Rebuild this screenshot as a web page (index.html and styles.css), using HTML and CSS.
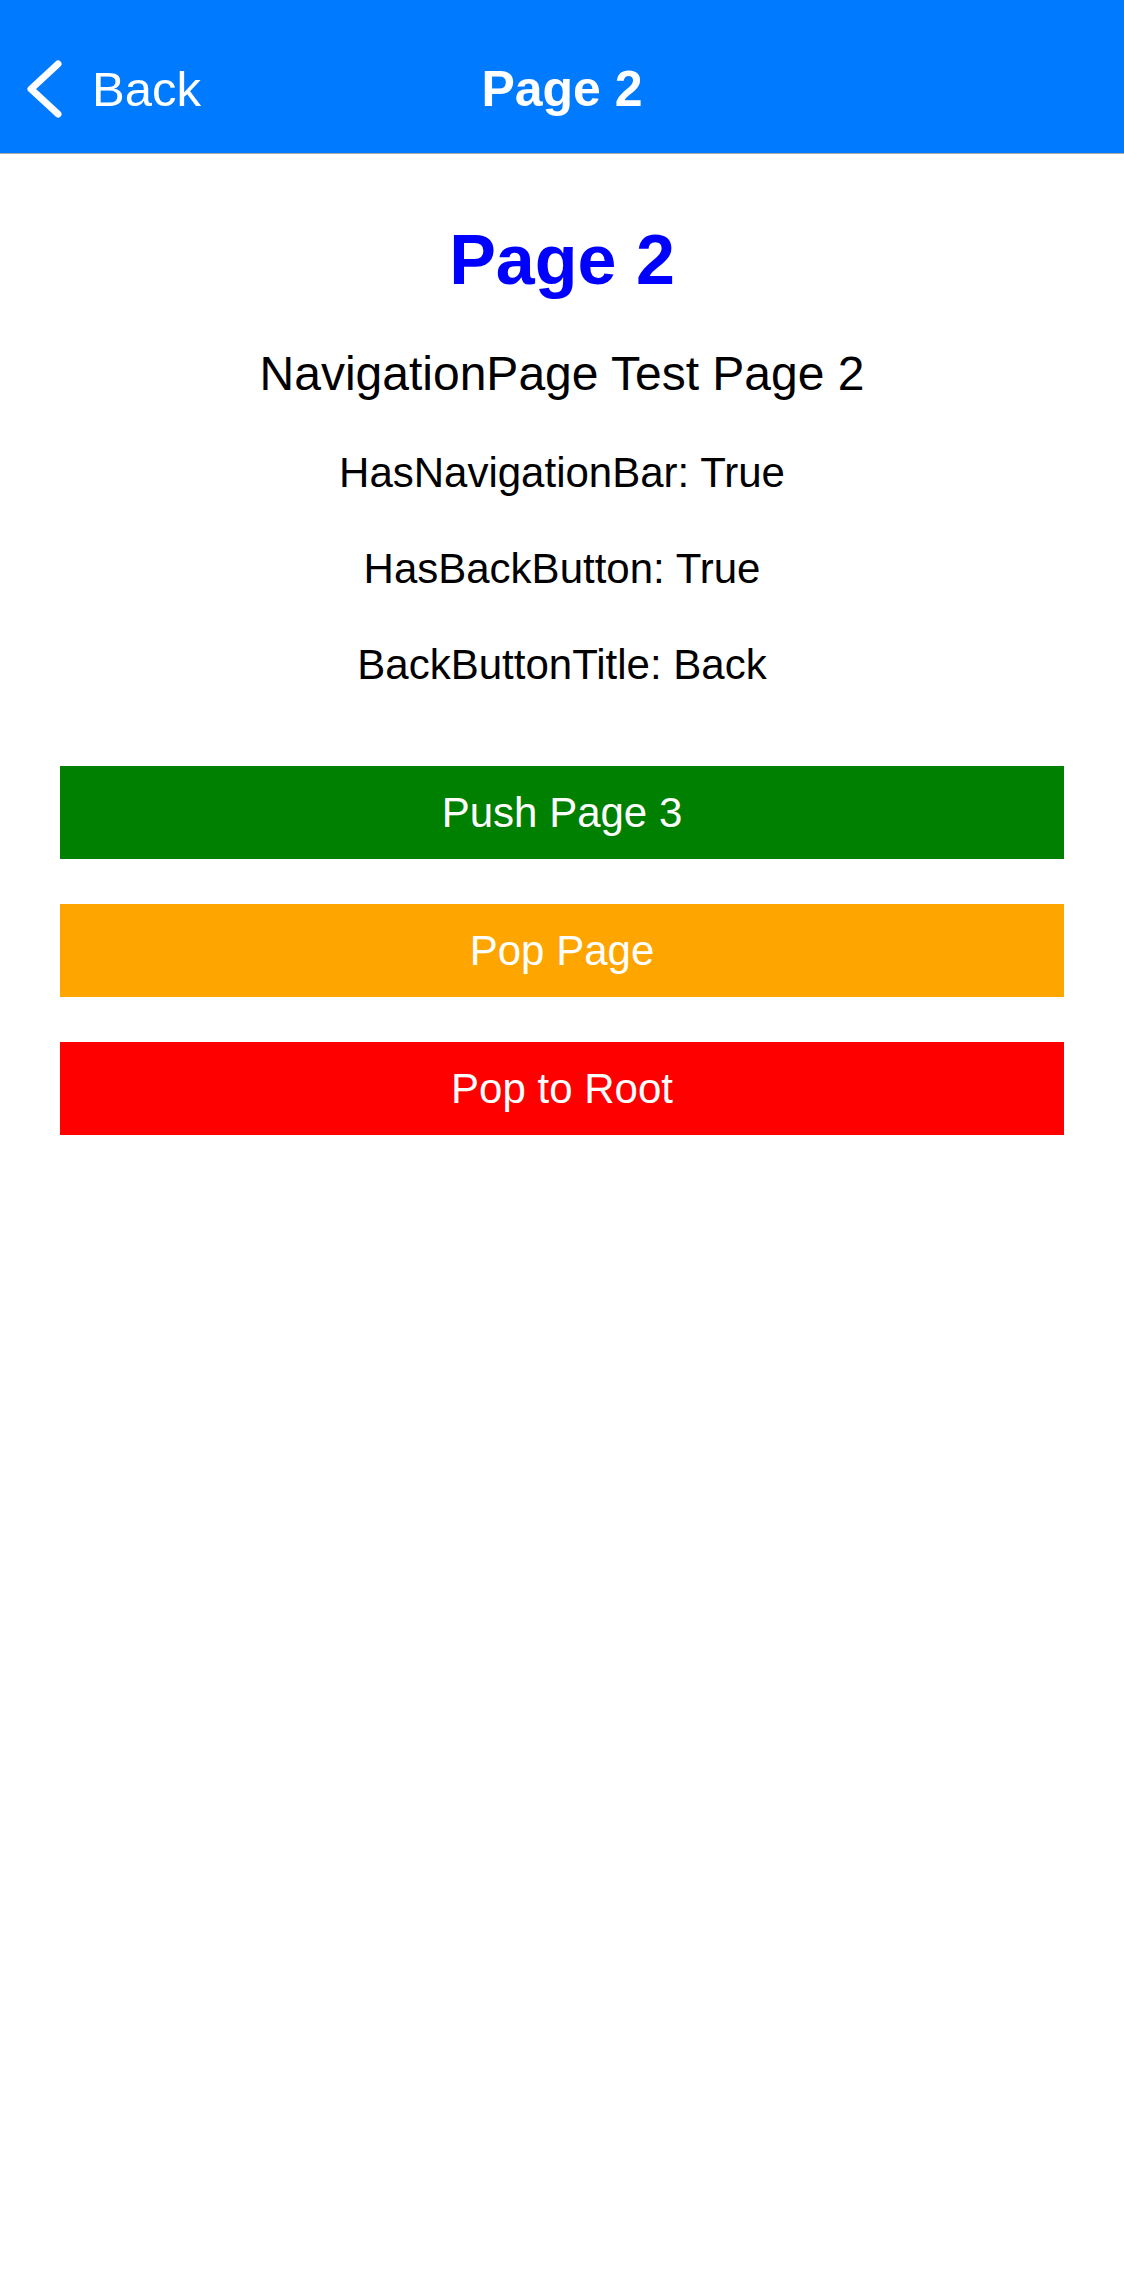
FILE: index.html
```html
<!DOCTYPE html>
<html lang="en">
<head>
<meta charset="utf-8">
<title>Page 2</title>
<link rel="stylesheet" href="styles.css">
</head>
<body>
<header class="navbar">
  <div class="nav-inner">
    <div class="nav-left">
      <a class="back-btn" href="#">
        <svg class="chevron" width="38" height="60" viewBox="0 0 38 60" aria-hidden="true">
          <polyline points="33,5 6,30 33,55" fill="none" stroke="#ffffff" stroke-width="7" stroke-linecap="round" stroke-linejoin="round"/>
        </svg>
        <span class="back-label">Back</span>
      </a>
    </div>
    <div class="nav-title">Page 2</div>
    <div class="nav-right"></div>
  </div>
</header>
<main class="content">
  <h1 class="page-title">Page 2</h1>
  <p class="subtitle">NavigationPage Test Page 2</p>
  <p class="info info-first">HasNavigationBar: True</p>
  <p class="info">HasBackButton: True</p>
  <p class="info">BackButtonTitle: Back</p>
  <div class="actions">
    <button class="action action-green" type="button">Push Page 3</button>
    <button class="action action-orange" type="button">Pop Page</button>
    <button class="action action-red" type="button">Pop to Root</button>
  </div>
</main>
</body>
</html>
```

FILE: styles.css
```css
html, body {
  margin: 0;
  padding: 0;
  background: #ffffff;
}

body {
  font-family: "Liberation Sans", Arial, sans-serif;
  color: #000000;
  width: 1124px;
  min-height: 2286px;
}

.navbar {
  background: #007aff;
  height: 129px;
  padding-top: 24px;
  border-bottom: 1px solid #a9a9a9;
  box-sizing: content-box;
}

.nav-inner {
  height: 129px;
  display: grid;
  grid-template-columns: 1fr auto 1fr;
  align-items: center;
}

.nav-left {
  display: flex;
  align-items: center;
}

.back-btn {
  display: flex;
  align-items: center;
  gap: 29px;
  margin-left: 25px;
  color: #ffffff;
  text-decoration: none;
}

.chevron {
  display: block;
  flex: none;
}

.back-label {
  font-size: 49px;
  line-height: 60px;
}

.nav-title {
  color: #ffffff;
  font-weight: bold;
  font-size: 50px;
  line-height: 60px;
  text-align: center;
}

.content {
  padding-top: 64px;
  display: flex;
  flex-direction: column;
  align-items: stretch;
  text-align: center;
}

.page-title {
  margin: 0;
  color: #0000ff;
  font-size: 70px;
  line-height: 84px;
  font-weight: bold;
}

.subtitle {
  margin: 43px 0 0;
  font-size: 48px;
  line-height: 58px;
}

.info {
  margin: 46px 0 0;
  font-size: 42px;
  line-height: 50px;
}

.info-first {
  margin-top: 45px;
}

.actions {
  margin: 76px 60px 0 60px;
  display: flex;
  flex-direction: column;
  gap: 45px;
}

.action {
  display: block;
  width: 100%;
  height: 93px;
  border: none;
  border-radius: 0;
  padding: 0;
  margin: 0;
  color: #ffffff;
  font-family: "Liberation Sans", Arial, sans-serif;
  font-size: 42px;
  line-height: 93px;
  text-align: center;
  cursor: pointer;
}

.action-green { background: #008000; }
.action-orange { background: #ffa500; }
.action-red { background: #ff0000; }
```
